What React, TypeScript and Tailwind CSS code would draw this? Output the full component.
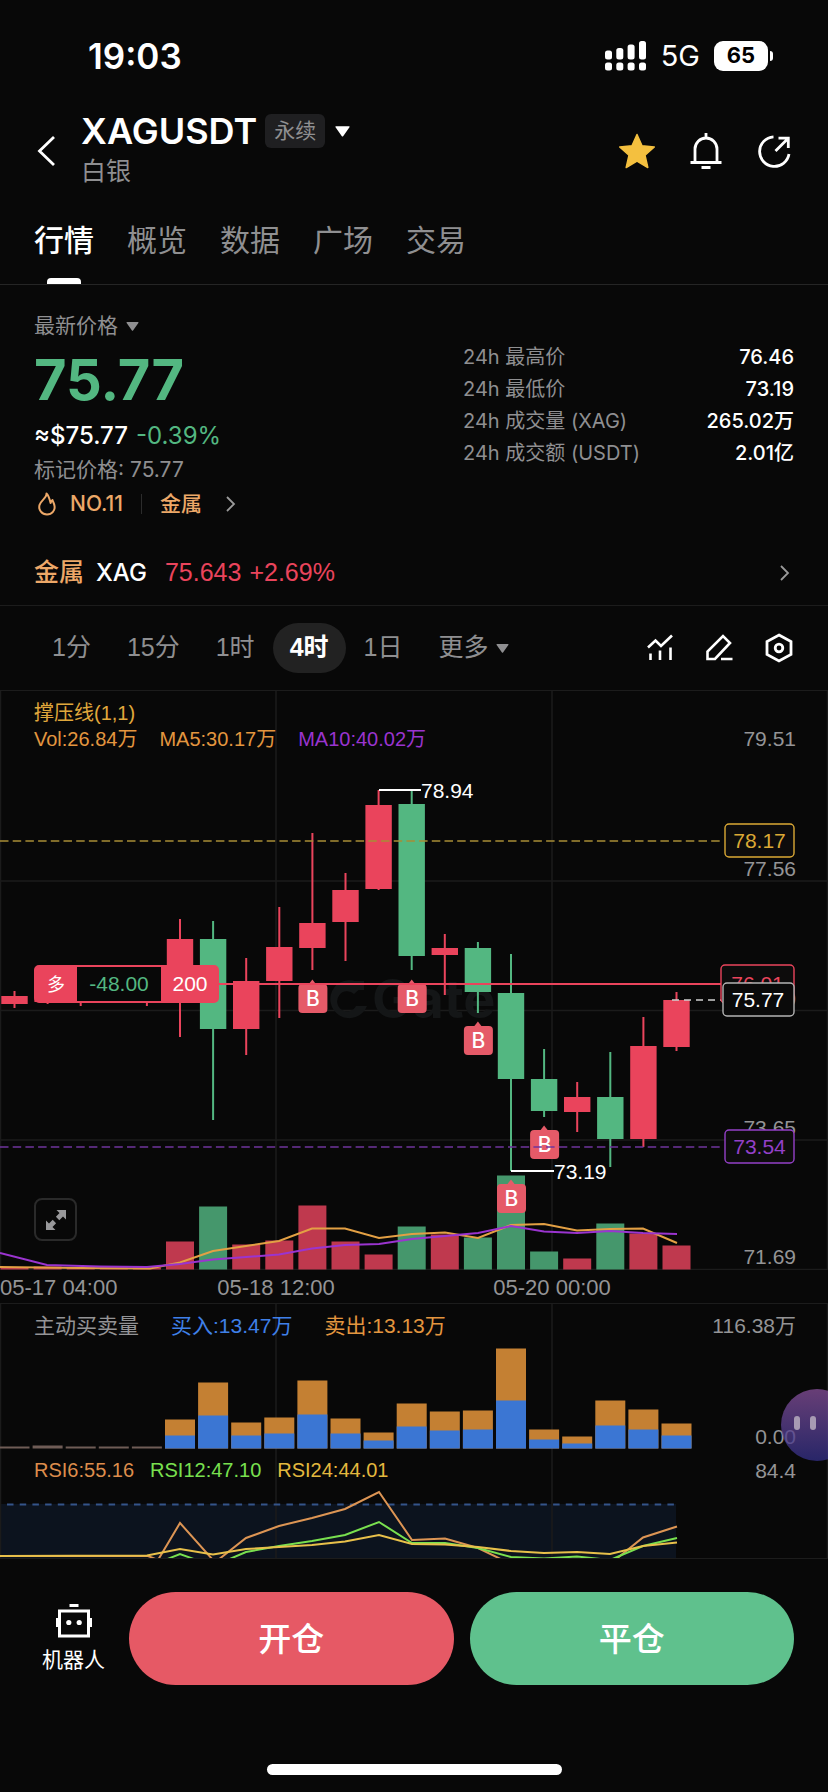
import React, { useState } from 'react';

const TABS = ['行情', '概览', '数据', '广场', '交易'];
const INTERVALS = ['1分', '15分', '1时', '4时', '1日'];

const STATS = [
  { label: '24h 最高价', value: '76.46' },
  { label: '24h 最低价', value: '73.19' },
  { label: '24h 成交量 (XAG)', value: '265.02万' },
  { label: '24h 成交额 (USDT)', value: '2.01亿' },
];

const RED = '#ea445c';
const GREEN = '#53b781';

// one slot per 4h candle
const cx = (i: number) => 14.5 + 33.1 * i;

// [body top, body bottom, wick top, wick bottom, is up]
const CANDLES: [number, number, number, number, boolean][] = [
  [305, 313, 300, 317, true],
  [303, 311, 300, 313, true],
  [303, 311, 300, 315, true],
  [303, 311, 300, 311, true],
  [303, 311, 300, 315, true],
  [248, 309, 228, 346, true],
  [248, 338, 230, 429, false],
  [290, 338, 267, 364, true],
  [256, 290, 216, 327, true],
  [232, 257, 142, 279, true],
  [199, 231, 182, 270, true],
  [114, 198, 99, 199, true],
  [113, 265, 99, 279, false],
  [257, 264, 243, 304, true],
  [257, 301, 251, 322, false],
  [302, 388, 263, 480, false],
  [388, 420, 358, 426, false],
  [406, 421, 391, 441, true],
  [406, 448, 361, 476, false],
  [355, 448, 326, 456, true],
  [309, 356, 301, 360, true],
];

const VOLUMES = [2, 3, 2, 2, 2, 28, 63, 25, 29, 64, 28, 15, 43, 35, 32, 94, 18, 11, 46, 36, 24];

// [total, bought]
const FLOWS: [number, number][] = [
  [2, 1], [3, 1], [2, 1], [2, 1], [2, 1],
  [29, 13], [66, 33], [26, 13], [31, 15], [68, 34], [30, 15], [16, 8], [45, 22],
  [37, 18], [38, 19], [100, 48], [19, 9], [12, 5], [48, 23], [39, 19], [25, 13],
];

const MARKS = [
  { i: 9, y: 293 },
  { i: 12, y: 293 },
  { i: 14, y: 335 },
  { i: 16, y: 439 },
  { i: 15, y: 493 },
];

const AXIS = [
  { text: '79.51', y: 48 },
  { text: '77.56', y: 178 },
  { text: '75.60', y: 308 },
  { text: '73.65', y: 437 },
  { text: '71.69', y: 566 },
];

const Caret = ({ className }: { className?: string }) => (
  <svg viewBox="0 0 14 10" className={className} fill="currentColor" aria-hidden="true">
    <path d="M1 0h12a.6.6 0 0 1 .5 1L7.6 9.4a.8.8 0 0 1-1.2 0L.5 1A.6.6 0 0 1 1 0z" />
  </svg>
);

const Chevron = ({ className }: { className?: string }) => (
  <svg viewBox="0 0 10 16" className={className} fill="none" stroke="currentColor" strokeWidth="1.8" aria-hidden="true">
    <path d="M1 1l7 7-7 7" />
  </svg>
);

const StatusBar = () => (
  <div className="flex h-[111px] items-center justify-between pl-[88px] pr-[55px]">
    <span className="text-[35px] font-semibold leading-10">19:03</span>
    <div className="flex items-center gap-3.5">
      <svg width="42" height="30" viewBox="0 0 42 30" fill="#fff" aria-hidden="true">
        <rect x="0" y="9.500" width="7" height="9" rx="2.500" />
        <rect x="11.300" y="7" width="7" height="11.500" rx="2.500" />
        <rect x="22.600" y="3.500" width="7" height="15" rx="2.500" />
        <rect x="34" y="0" width="7" height="18.500" rx="2.500" />
        <rect x="0" y="21.500" width="7" height="8" rx="2.500" />
        <rect x="11.300" y="21.500" width="7" height="8" rx="2.500" />
        <rect x="22.600" y="21.500" width="7" height="8" rx="2.500" />
        <rect x="34" y="21.500" width="7" height="8" rx="2.500" />
      </svg>
      <span className="text-[29px] leading-10">5G</span>
      <div className="flex items-center gap-0.5">
        <span className="flex h-[30px] w-[54px] items-center justify-center rounded-[9px] bg-white text-[22px] font-bold text-black">
          65
        </span>
        <span className="h-2.5 w-[3px] rounded-r-full bg-white" />
      </div>
    </div>
  </div>
);

const Header = () => (
  <header className="flex items-center justify-between px-9">
    <div className="flex items-center gap-[25px]">
      <button aria-label="返回" className="block">
        <svg width="20" height="32" viewBox="0 0 20 32" fill="none" stroke="#fff" strokeWidth="2.800" aria-hidden="true">
          <path d="M18 2L3.500 16 18 30" />
        </svg>
      </button>
      <div>
        <div className="flex items-center">
          <h1 className="text-[36px] font-semibold leading-10">XAGUSDT</h1>
          <span className="ml-2 rounded-md bg-[#1f1f21] px-[9px] text-[21px] leading-[34px] text-[#8f8f91]">永续</span>
          <button aria-label="切换合约" className="ml-2.5">
            <Caret className="h-[11px] w-[15px] text-white" />
          </button>
        </div>
        <p className="text-[25px] leading-10 text-[#8f8f91]">白银</p>
      </div>
    </div>
    <div className="flex items-center gap-[34px]">
      <button aria-label="收藏">
        <svg width="38" height="36" viewBox="0 0 38 36" aria-hidden="true">
          <path
            d="M19 1.500l5 11.300 12.300 1.200-9.300 8.200 2.800 12.300L19 28.200 8.200 34.500 11 22.200 1.700 14 14 12.800z"
            fill="#f4c03f"
            stroke="#f4c03f"
            strokeWidth="1.500"
            strokeLinejoin="round"
          />
        </svg>
      </button>
      <button aria-label="提醒">
        <svg width="32" height="38" viewBox="0 0 32 38" fill="none" stroke="#fff" strokeWidth="2.800" aria-hidden="true">
          <path d="M5 30V17a11 11 0 0 1 22 0v13M0.500 30.500h31M16 1v5M11.500 35.500h9" />
        </svg>
      </button>
      <button aria-label="分享">
        <svg width="36" height="36" viewBox="0 0 36 36" fill="none" stroke="#fff" strokeWidth="2.800" aria-hidden="true">
          <path d="M17.500 3.800A14.800 14.800 0 1 0 33 21M19.500 18L31.500 6M22.500 5.200h9.800V15" />
        </svg>
      </button>
    </div>
  </header>
);

const Summary = () => (
  <section className="border-b border-[#1c1c1c] px-[34px]">
    <div className="flex justify-between pt-[25px]">
      <div>
        <button className="flex items-center gap-2 text-[21px] leading-8 text-[#8f8f91]">
          最新价格
          <Caret className="h-[9px] w-[13px]" />
        </button>
        <p className="text-[56px] font-bold leading-[76px] text-[#53b781]">75.77</p>
        <p className="flex gap-2 text-[24px] leading-9">
          <span className="font-medium">≈$75.77</span>
          <span className="text-[#53b781]">-0.39%</span>
        </p>
        <p className="text-[21px] leading-8 text-[#8f8f91]">标记价格: 75.77</p>
        <a href="#rank" className="flex items-center text-[21px] font-medium leading-9 text-[#eda868]">
          <svg width="24" height="24" viewBox="0 0 24 24" fill="none" stroke="currentColor" strokeWidth="2" aria-hidden="true">
            <path d="M12.500 1.500c.8 4-5.500 6.500-7 11.500-1.300 5.200 2.500 9.500 7.500 9.500s8.300-4 7.500-8.700c-.4-2.600-1.500-3.800-2-5.800-1 .8-1.600 1.800-1.900 3-1-4.200-2-7.500-4.100-9.500z" strokeLinejoin="round" />
          </svg>
          <span className="ml-3">NO.11</span>
          <span className="mx-[18px] h-5 w-px bg-[#2c2c2c]" />
          金属
          <Chevron className="ml-6 h-4 w-2.5 text-[#9a9a9a]" />
        </a>
      </div>
      <dl className="mt-[31px] w-[331px] text-[20px] leading-8">
        {STATS.map((s) => (
          <div key={s.label} className="flex justify-between">
            <dt className="text-[#8f8f91]">{s.label}</dt>
            <dd className="font-medium">{s.value}</dd>
          </div>
        ))}
      </dl>
    </div>
    <a href="#xag" className="mt-[18px] flex h-[65px] items-center text-[25px]">
      <span className="font-medium text-[#eda868]">金属</span>
      <span className="ml-3 text-2xl font-medium">XAG</span>
      <span className="ml-[18px] font-['Liberation_Sans',sans-serif] text-[#ea445c]">75.643</span>
      <span className="ml-2 font-['Liberation_Sans',sans-serif] text-[#ea445c]">+2.69%</span>
      <Chevron className="ml-auto mr-1 h-4 w-2.5 text-[#9a9a9a]" />
    </a>
  </section>
);

const IntervalBar = () => {
  const [active, setActive] = useState('4时');

  return (
    <div className="flex h-[85px] items-center justify-between border-b border-[#1c1c1c] px-[34px]">
      <div className="flex items-center text-[25px] text-[#8f8f91]">
        {INTERVALS.map((item) => (
          <button
            key={item}
            onClick={() => setActive(item)}
            className={
              item === active
                ? 'h-[50px] rounded-full bg-[#222222] px-[17px] font-bold text-white'
                : 'h-[50px] px-[18px]'
            }
          >
            {item}
          </button>
        ))}
        <button className="flex h-[50px] items-center gap-2 px-[18px]">
          更多
          <Caret className="h-[9px] w-[13px]" />
        </button>
      </div>
      <div className="flex items-center gap-[31px]">
        <button aria-label="指标">
          <svg width="28" height="28" viewBox="0 0 28 28" fill="none" stroke="#fff" strokeWidth="2.600" aria-hidden="true">
            <path d="M2 13.500l7.500-7 5.500 5.500L26 1.500M4.500 19.500V26M14 16.500V26M24.500 13.500V26" />
          </svg>
        </button>
        <button aria-label="画线">
          <svg width="28" height="28" viewBox="0 0 28 28" fill="none" stroke="#fff" strokeWidth="2.600" aria-hidden="true">
            <path d="M2.500 25v-7.500L18 2l7 7L10 25zM16 25h11.500" />
          </svg>
        </button>
        <button aria-label="设置">
          <svg width="30" height="30" viewBox="0 0 30 30" fill="none" stroke="#fff" strokeWidth="2.800" aria-hidden="true">
            <path d="M15 2l12 6.500v13L15 28 3 21.500v-13z" />
            <circle cx="15" cy="15" r="3.800" />
          </svg>
        </button>
      </div>
    </div>
  );
};

const Grid = ({ height }: { height: number }) => (
  <path d={`M.5 0V${height}M276 0V${height}M552 0V${height}M827.500 0V${height}`} stroke="#1b1b1b" strokeWidth="1.500" fill="none" />
);

const PriceTag = ({ x, y, w, h, color, text }: { x: number; y: number; w: number; h: number; color: string; text: string }) => (
  <g>
    <rect x={x} y={y} width={w} height={h} rx="4" fill="#0d0c0c" stroke={color} strokeWidth="1.400" />
    <text x={x + w / 2} y={y + h / 2 + 7} textAnchor="middle" fill={color}>{text}</text>
  </g>
);

const PriceChart = () => (
  <div className="relative">
    <svg viewBox="0 0 828 579" className="block w-full text-[21px]">
      <Grid height={579} />
      <path d="M0 190h828M0 319.500h828M0 449h828M0 578.500h828" stroke="#1b1b1b" strokeWidth="1.500" />

      {/* watermark */}
      <g fill="#141617">
        <path d="M363 295a19 19 0 1 0 4 20h-11a10 10 0 1 1-2-12z" />
        <path d="M355 290h9v9h-9z" />
        <text x="372" y="327" fontSize="54" fontWeight="700" fontFamily="Inter, sans-serif">Gate</text>
      </g>

      {CANDLES.map(([top, bottom, high, low, up], i) => (
        <g key={i} fill={up ? RED : GREEN}>
          <rect x={cx(i) - 1} y={high} width="2" height={low - high} />
          <rect x={cx(i) - 13.2} y={top} width="26.400" height={bottom - top} />
        </g>
      ))}
      {VOLUMES.map((v, i) => (
        <rect key={i} x={cx(i) - 14} y={578.5 - v} width="28" height={v} fill={CANDLES[i][4] ? '#bf394e' : '#45976c'} />
      ))}

      <g fill="none" strokeWidth="2">
        <path
          stroke="#e3a044"
          d="M0 576L80 577 150 577.500 180 571.500 213 560 246 555 279 550 312 537.500 345 537.500 379 547 412 543 445 541.500 478 547 511 534 544 533 577 539.500 610 538 643 537.500 677 552"
        />
        <path
          stroke="#9a34cf"
          d="M0 562L47 574 100 575.500 147 576 180 573 213 568.500 246 566 279 563.500 312 557.500 345 554 379 553 412 548 445 545 478 542 511 535 544 540.500 577 542 610 540 643 542 677 543"
        />
      </g>

      <g textAnchor="end" fill="#949496">
        {AXIS.map((a) => (
          <text key={a.text} x="796" y={a.y + 7}>{a.text}</text>
        ))}
      </g>

      {/* buy marks */}
      {MARKS.map(({ i, y }) => (
        <g key={i}>
          <rect x={cx(i) - 14} y={y} width="29" height="29" rx="4" fill="#e55a68" />
          <path d={`M${cx(i) - 3.5} ${y}l3.500-4.500 3.500 4.500z`} fill="#e55a68" />
          <text x={cx(i) + 0.5} y={y + 22} textAnchor="middle" fill="#fff" fontWeight="500" fontFamily="Inter, sans-serif">B</text>
        </g>
      ))}

      {/* highest and lowest price */}
      <path d="M379 99h42M511 480h43" stroke="#fff" strokeWidth="2" />
      <g fill="#fff">
        <text x="421" y="107">78.94</text>
        <text x="554" y="488">73.19</text>
      </g>

      <path d="M0 150h722" stroke="#a88d36" strokeWidth="1.600" strokeDasharray="8.500 4.200" />
      <path d="M0 456h722" stroke="#6f349c" strokeWidth="1.600" strokeDasharray="8.500 4.200" />
      <path d="M218 293h504" stroke={RED} strokeWidth="2" />
      <path d="M672 309h50" stroke="#d0d0d0" strokeWidth="1.600" strokeDasharray="7 5" />

      <PriceTag x={725} y={133} w={69} h={33} color="#dba935" text="78.17" />
      <PriceTag x={721} y={274} w={73} h={38} color={RED} text="76.01" />
      <PriceTag x={725} y={439} w={69} h={33} color="#9440c8" text="73.54" />
      <rect x="723" y="292" width="71" height="33" rx="4" fill="#0a0a0a" stroke="#b4b4b4" strokeWidth="1.400" />
      <text x="758" y="316" textAnchor="middle" fill="#fff">75.77</text>

      {/* open position */}
      <rect x="35" y="275" width="183" height="36" rx="4" fill={RED} stroke={RED} strokeWidth="2" />
      <rect x="77" y="276" width="84" height="34" fill="#080808" />
      <g textAnchor="middle">
        <text x="56" y="300" fill="#fff" fontSize="18">多</text>
        <text x="119" y="300" fill={GREEN}>-48.00</text>
        <text x="190" y="300" fill="#fff">200</text>
      </g>
    </svg>

    <div className="absolute left-[34px] top-[9px] text-[20px] leading-[26px]">
      <p className="text-[#e0a83c]">撑压线(1,1)</p>
      <p className="flex gap-[22px]">
        <span className="text-[#e3963f]">Vol:26.84万</span>
        <span className="text-[#e3963f]">MA5:30.17万</span>
        <span className="text-[#9a34cf]">MA10:40.02万</span>
      </p>
    </div>

    <button
      aria-label="全屏"
      className="absolute bottom-[29px] left-[34px] flex h-[43px] w-[43px] items-center justify-center rounded-lg border-2 border-[#2a2a2a] bg-[#080808]"
    >
      <svg width="20" height="20" viewBox="0 0 20 20" fill="#98989a" aria-hidden="true">
        <path d="M10.500 0H20v9.500l-3-3-3.700 3.700-3.400-3.400L13.500 3.100zM9.500 20H0v-9.500l3 3 3.700-3.700 3.400 3.400L6.500 16.900z" />
      </svg>
    </button>
  </div>
);

const FlowChart = () => (
  <div className="relative">
    <svg viewBox="0 0 828 148" className="block w-full text-[21px]">
      <Grid height={148} />
      {FLOWS.map(([total, bought], i) => (
        <g key={i}>
          <rect x={cx(i) - 15} y={144.5 - total} width="30" height={total} fill={i < 5 ? '#6f5c56' : '#c48033'} />
          {i > 4 && <rect x={cx(i) - 15} y={144.5 - bought} width="30" height={bought} fill="#3b76d3" />}
        </g>
      ))}
      <g textAnchor="end" fill="#949496">
        <text x="796" y="29">116.38万</text>
        <text x="796" y="140">0.00</text>
      </g>
    </svg>
    <p className="absolute left-[34px] top-[9px] flex gap-8 text-[21px] leading-[26px]">
      <span className="text-[#949496]">主动买卖量</span>
      <span className="text-[#3f80e8]">买入:13.47万</span>
      <span className="text-[#e3963f]">卖出:13.13万</span>
    </p>
  </div>
);

const RsiChart = () => (
  <div className="relative">
    <svg viewBox="0 0 828 106" className="block w-full overflow-hidden text-[21px]">
      <rect x="0" y="52" width="676" height="54" fill="#0c131e" />
      <Grid height={106} />
      <path d="M7 52.500h669" stroke="#34548a" strokeWidth="1.800" strokeDasharray="6.500 6.200" />
      <g fill="none" strokeWidth="2">
        <path
          stroke="#dd9554"
          d="M0 104L148 104 158 108 180 71 213 108 218 108 246 86 279 74 312 66 345 57 379 40 412 88 445 86.500 478 96 511 112 610 112 643 85.500 677 74.500"
        />
        <path
          stroke="#79e04f"
          d="M160 110L180 102 202 110 225 109 246 100 279 94 312 89 345 83 379 70 412 91 445 91 478 96 511 105 544 106.500 577 104.500 610 108 643 94 677 86"
        />
        <path
          stroke="#e8c04a"
          d="M0 104L147 103.500 180 97 213 102.500 246 97 279 95 312 93 345 89.500 379 83 412 92 445 92.500 478 95 511 99 544 101 577 100 610 102 643 94 677 90.500"
        />
      </g>
      <text x="796" y="26" textAnchor="end" fill="#949496">84.4</text>
    </svg>
    <p className="absolute left-[34px] top-[5px] flex gap-4 text-[20px] leading-[26px]">
      <span className="text-[#dd8d4c]">RSI6:55.16</span>
      <span className="text-[#79e04f]">RSI12:47.10</span>
      <span className="text-[#e3b83e]">RSI24:44.01</span>
    </p>
  </div>
);

const ActionBar = () => (
  <footer className="pt-[33px]">
    <div className="flex gap-4 px-[34px]">
      <button className="flex w-[79px] shrink-0 flex-col items-center pt-3 text-[21px] leading-[30px]">
        <svg width="36" height="34" viewBox="0 0 36 34" fill="none" stroke="#fff" strokeWidth="3" aria-hidden="true">
          <path d="M3.500 7h29v25h-29zM13.500 1.500h9M1.200 14v9M34.800 14v9" />
          <g fill="#fff" stroke="none">
            <circle cx="12.800" cy="18.500" r="2.600" />
            <circle cx="23.200" cy="18.500" r="2.600" />
          </g>
        </svg>
        <span className="mt-[7px]">机器人</span>
      </button>
      <button className="h-[93px] flex-1 rounded-full bg-[#e65965] pt-0.5 text-[33px] font-medium">开仓</button>
      <button className="h-[93px] flex-1 rounded-full bg-[#5fc18d] pt-0.5 text-[33px] font-medium">平仓</button>
    </div>
    <div className="mx-auto mb-[17px] mt-[79px] h-[11px] w-[295px] rounded-full bg-white" />
  </footer>
);

export default function App() {
  const [tab, setTab] = useState('行情');

  return (
    <main className="min-h-screen overflow-hidden bg-[#080808] font-['Inter','Noto_Sans_CJK_SC',sans-serif] text-white">
      <StatusBar />
      <Header />
      <nav className="flex gap-[33px] border-b border-[#252525] px-[34px] pt-[29px]">
        {TABS.map((name) => (
          <button
            key={name}
            onClick={() => setTab(name)}
            className={name === tab ? 'text-[30px] font-medium leading-10' : 'text-[30px] leading-10 text-[#8f8f91]'}
          >
            {name}
            <span className={name === tab ? 'mx-auto mt-[18px] block h-1.5 w-[34px] rounded-t-sm bg-white' : 'mt-[18px] block h-1.5'} />
          </button>
        ))}
      </nav>
      <Summary />
      <div className="font-['Liberation_Sans','Noto_Sans_CJK_SC',sans-serif]">
        <IntervalBar />
        <PriceChart />
        <div className="grid h-[34px] grid-cols-3 border-b border-[#1c1c1c] text-[22px] leading-9 text-[#949496]">
          <span>05-17 04:00</span>
          <span className="w-max -translate-x-1/2">05-18 12:00</span>
          <span className="w-max -translate-x-1/2">05-20 00:00</span>
        </div>
        <div className="relative border-b border-[#1c1c1c]">
          <FlowChart />
          <RsiChart />
          <button
            aria-label="助手"
            className="absolute -right-[25px] top-[85px] flex h-[72px] w-[72px] justify-start gap-2.5 rounded-full bg-linear-to-b from-[#88509b]/75 to-[#332f88]/75 pl-[13px] pt-[27px]"
          >
            <span className="h-3.5 w-1.5 rounded-full bg-[#a79bb3]" />
            <span className="h-3.5 w-1.5 rounded-full bg-[#a79bb3]" />
          </button>
        </div>
      </div>
      <ActionBar />
    </main>
  );
}
